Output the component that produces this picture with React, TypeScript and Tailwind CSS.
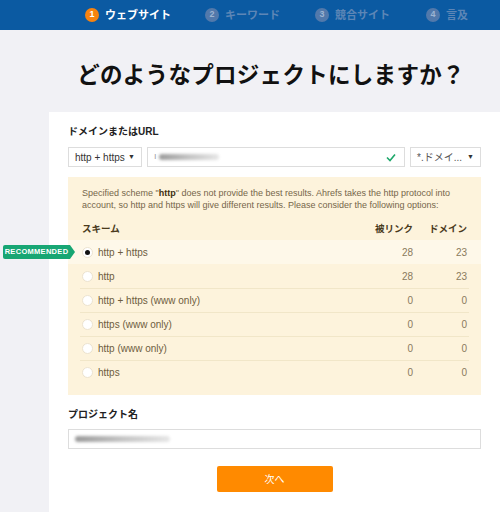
import React from "react";

const font = { fontFamily: '"Liberation Sans", Arial, "Noto Sans CJK JP", sans-serif' };

const steps = [
  { n: "1", label: "ウェブサイト", active: true, x: "w-[120px]" },
  { n: "2", label: "キーワード", active: false, x: "w-[110px]" },
  { n: "3", label: "競合サイト", active: false, x: "w-[111px]" },
  { n: "4", label: "言及", active: false, x: "w-[60px]" },
];

const rows = [
  { name: "http + https", a: "28", b: "23", selected: true },
  { name: "http", a: "28", b: "23" },
  { name: "http + https (www only)", a: "0", b: "0" },
  { name: "https (www only)", a: "0", b: "0" },
  { name: "http (www only)", a: "0", b: "0" },
  { name: "https", a: "0", b: "0" },
];

function Blur({ w }: { w: number }) {
  return (
    <div
      className="h-[6px] rounded-full bg-gradient-to-r from-[#9a9a9a] via-[#c4c4c4] to-[#e6e6e6] blur-[1.5px]"
      style={{ width: w }}
    />
  );
}

export default function App() {
  return (
    <div className="w-[500px] h-[512px] overflow-hidden bg-[#f1f1f5]" style={font}>
      {/* header */}
      <div className="h-[30px] bg-[#0b5aa2] flex items-center pl-[85px]">
        {steps.map((s) => (
          <div key={s.n} className={`flex items-center shrink-0 ${s.x}`}>
            <div
              className={`w-[14px] h-[14px] rounded-full flex items-center justify-center text-[9px] font-bold ${
                s.active ? "bg-[#f7830f] text-white" : "bg-[#5279ab] text-[#9db4d2]"
              }`}
            >
              {s.n}
            </div>
            <span
              className={`ml-[6px] text-[11px] font-bold whitespace-nowrap ${s.active ? "text-white" : "text-[#5d86b6]"}`}
            >
              {s.label}
            </span>
          </div>
        ))}
      </div>

      {/* title */}
      <div className="h-[82px] flex items-center justify-center pl-[42px] pt-[6px]">
        <h1 className="text-[22.5px] font-bold text-[#111] tracking-[0.3px]" style={{ fontFamily: '"Noto Sans CJK JP", sans-serif' }}>
          どのようなプロジェクトにしますか？
        </h1>
      </div>

      {/* card */}
      <div className="ml-[49px] bg-white pl-[19px] pr-[19px] pt-[13px] pb-[20px] relative">
        <div className="text-[10px] font-bold text-[#222] leading-[14px]">ドメインまたはURL</div>
        <div className="flex mt-[8px] h-[20px] gap-[5px]">
          <div className="w-[74px] border border-[#ddd] flex items-center justify-between px-[6px] text-[10px] text-[#333]">
            <span>http + https</span>
            <span className="text-[7px]">▼</span>
          </div>
          <div className="w-[258px] border border-[#ddd] flex items-center justify-between pl-[6px] pr-[8px]">
            <div className="flex items-center gap-[2px]">
              <span className="text-[9px] text-[#999]">ı</span>
              <Blur w={60} />
            </div>
            <svg width="10" height="9" viewBox="0 0 10 9">
              <path d="M1 4.5 L4 7.5 L9 1.5" fill="none" stroke="#1ea86b" strokeWidth="1.6" />
            </svg>
          </div>
          <div className="w-[71px] border border-[#ddd] flex items-center justify-between px-[6px] text-[10px] text-[#555]">
            <span>*.ドメイ...</span>
            <span className="text-[7px] text-[#333]">▼</span>
          </div>
        </div>

        {/* yellow box */}
        <div className="mt-[10px] bg-[#fdf3dc] pt-[11px] pb-[11px]">
          <p className="px-[14px] text-[9px] leading-[11.5px] text-[#76664a] whitespace-nowrap">
            Specified scheme "<b className="text-[#3d2e10]">http</b>" does not provide the best results. Ahrefs takes the http protocol into
            <br />
            account, so http and https will give different results. Please consider the following options:
          </p>
          <div className="flex items-center h-[24px] mt-[5px] px-[14px] text-[9.5px] font-bold text-[#4a3a1c]" style={{ fontFamily: '"Noto Sans CJK JP", sans-serif' }}>
            <span className="flex-1">スキーム</span>
            <span className="w-[60px] text-right">被リンク</span>
            <span className="w-[54px] text-right">ドメイン</span>
          </div>
          {rows.map((r, i) => (
            <div key={r.name} className={r.selected ? "bg-[#fef8e9]" : ""}>
              <div
                className={`relative flex items-center h-[24px] mx-[12px] px-[2px] text-[10px] text-[#6e5d3e] ${
                  i > 1 ? "border-t border-[#f1e6c8]" : ""
                }`}
              >
                {r.selected && (
                  <div className="absolute left-[-77px] top-[5px] flex items-center">
                    <div className="h-[14px] w-[67px] bg-[#17a673] text-white text-[7.5px] font-bold tracking-[0.3px] flex items-center justify-center rounded-l-[2px]">
                      RECOMMENDED
                    </div>
                    <div className="w-0 h-0 border-y-[7px] border-y-transparent border-l-[5px] border-l-[#17a673]" />
                  </div>
                )}
                <div className="w-[11px] h-[11px] rounded-full bg-white border border-[#ece3cf] flex items-center justify-center">
                  {r.selected && <div className="w-[5px] h-[5px] rounded-full bg-[#111]" />}
                </div>
                <span className="ml-[5px] flex-1">{r.name}</span>
                <span className="w-[60px] text-right text-[#8a7a5c]">{r.a}</span>
                <span className="w-[54px] text-right text-[#8a7a5c]">{r.b}</span>
              </div>
            </div>
          ))}
        </div>

        <div className="mt-[13px] text-[10px] font-bold text-[#222] leading-[14px]">プロジェクト名</div>
        <div className="mt-[7px] h-[20px] border border-[#ddd] flex items-center pl-[6px]">
          <Blur w={95} />
        </div>

        <div className="flex justify-center mt-[17px]">
          <button className="w-[116px] h-[26px] bg-[#ff8a00] rounded-[2px] text-white text-[10px]">次へ</button>
        </div>
      </div>
    </div>
  );
}
